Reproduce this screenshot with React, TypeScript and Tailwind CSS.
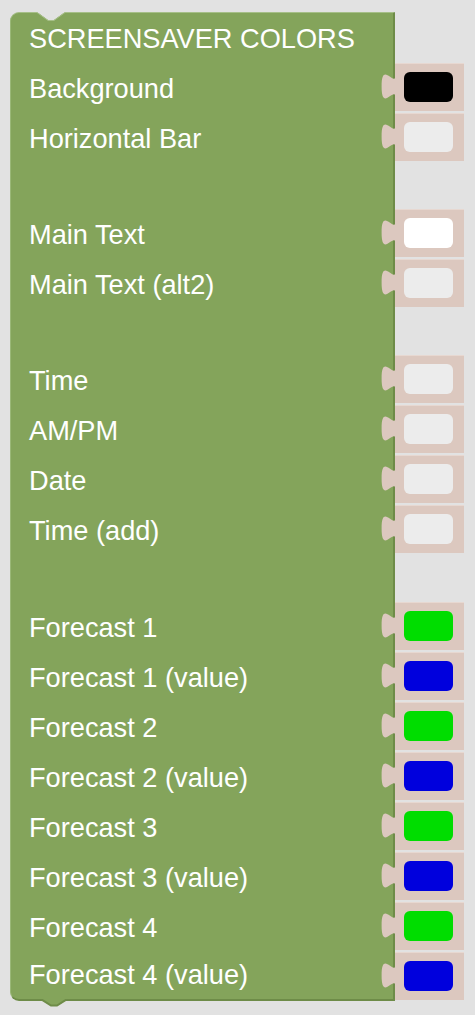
import React from 'react';

type Row =
  | { kind: 'field'; label: string; color: string }
  | { kind: 'gap'; height: string };

const rows: Row[] = [
  { kind: 'field', label: 'Background', color: 'bg-[#000000]' },
  { kind: 'field', label: 'Horizontal Bar', color: 'bg-[#ececec]' },
  { kind: 'gap', height: 'h-[46px]' },
  { kind: 'field', label: 'Main Text', color: 'bg-[#ffffff]' },
  { kind: 'field', label: 'Main Text (alt2)', color: 'bg-[#ececec]' },
  { kind: 'gap', height: 'h-[46px]' },
  { kind: 'field', label: 'Time', color: 'bg-[#ececec]' },
  { kind: 'field', label: 'AM/PM', color: 'bg-[#ececec]' },
  { kind: 'field', label: 'Date', color: 'bg-[#ececec]' },
  { kind: 'field', label: 'Time (add)', color: 'bg-[#ececec]' },
  { kind: 'gap', height: 'h-[47px]' },
  { kind: 'field', label: 'Forecast 1', color: 'bg-[#00dd00]' },
  { kind: 'field', label: 'Forecast 1 (value)', color: 'bg-[#0000dd]' },
  { kind: 'field', label: 'Forecast 2', color: 'bg-[#00dd00]' },
  { kind: 'field', label: 'Forecast 2 (value)', color: 'bg-[#0000dd]' },
  { kind: 'field', label: 'Forecast 3', color: 'bg-[#00dd00]' },
  { kind: 'field', label: 'Forecast 3 (value)', color: 'bg-[#0000dd]' },
  { kind: 'field', label: 'Forecast 4', color: 'bg-[#00dd00]' },
  { kind: 'field', label: 'Forecast 4 (value)', color: 'bg-[#0000dd]' },
];

const ColourField = ({ color }: { color: string }) => (
  <div className="relative mt-[-1px] h-[48px] w-[69px] border-t border-[#e7d8d1] bg-[#dcc8bf]">
    {/* puzzle tab */}
    <svg
      className="absolute left-[-15px] top-[9px]"
      width="16"
      height="27"
      viewBox="0 0 16 27"
    >
      <path d="M16 0 C16 18 1.6 -14.4 1.6 13.5 S16 9 16 27 Z" fill="#dcc8bf" />
    </svg>
    <div className={`ml-[9px] mt-[8px] h-[30px] w-[49px] rounded-[6px] ${color}`} />
  </div>
);

const App = () => {
  const last = rows.length - 1;

  return (
    <div
      className="min-h-screen bg-[#e2e2e2] pl-[10px] pt-[12px] text-white"
      style={{ fontFamily: '"Liberation Sans", Arial, sans-serif' }}
    >
      <div className="flex w-[454px] flex-col">
        {/* Title */}
        <div className="relative flex h-[52px] w-[385px] items-center rounded-tl-[9px] border-l border-r-2 border-t border-l-[#9ab878] border-r-[#6e8c48] border-t-[#a6bf88] bg-[#84a45b] pl-[18px] pt-[2px] text-[27.2px]">
          <svg className="absolute left-[26px] top-[-1px]" width="28" height="9" viewBox="0 0 28 9">
            <path d="M0 0 L11 8 L17 8 L28 0 Z" fill="#e2e2e2" />
            <path d="M0 0.5 L11 8.5 L17 8.5 L28 0.5" fill="none" stroke="#a6bf88" strokeWidth="1" />
          </svg>
          SCREENSAVER COLORS
        </div>

        {rows.map((row, i) =>
          row.kind === 'gap' ? (
            <div
              key={i}
              className={`w-[385px] border-l border-r-2 border-l-[#9ab878] border-r-[#6e8c48] bg-[#84a45b] ${row.height}`}
            />
          ) : (
            <div key={i} className="flex">
              <div
                className={`relative flex w-[385px] items-center border-l border-r-2 border-l-[#9ab878] border-r-[#6e8c48] bg-[#84a45b] pl-[18px] text-[27.2px] ${
                  i === last ? 'h-[48px] rounded-bl-[9px] border-b-2 border-b-[#6e8c48] pb-[2px]' : 'h-[50px]'
                }`}
              >
                {row.label}
                {i === last && (
                  <svg className="absolute left-[29px] top-full" width="28" height="8" viewBox="0 0 28 8">
                    <path d="M0 0 L11 7 L17 7 L28 0 Z" fill="#84a45b" />
                    <path d="M0 -0.5 L11 6.5 L17 6.5 L28 -0.5" fill="none" stroke="#6e8c48" strokeWidth="2" />
                  </svg>
                )}
              </div>
              <ColourField color={row.color} />
            </div>
          )
        )}
      </div>
    </div>
  );
};

export default App;
